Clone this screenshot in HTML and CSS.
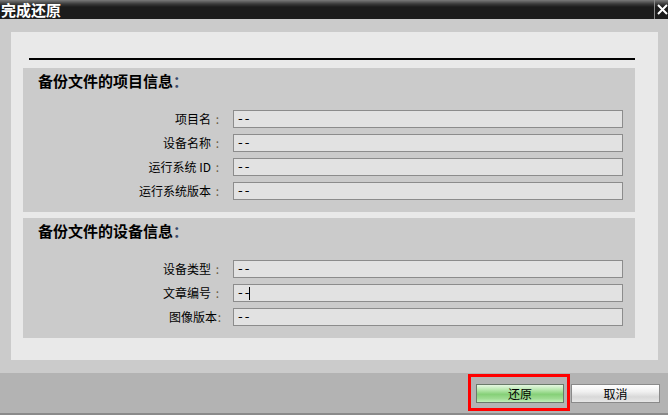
FILE: index.html
```html
<!DOCTYPE html>
<html lang="zh-CN">
    <head>
        <meta charset="UTF-8" />
        <meta name="viewport" content="width=device-width, initial-scale=1.0" />
        <title>完成还原</title>

        <link rel="stylesheet" href="styles.css">
    </head>

    <body>
        <div class="dialog">
            <div class="titlebar">
                <span class="title">完成还原</span>
                <span class="close">
                    <svg width="11" height="11" viewBox="0 0 11 11">
                        <path d="M1 1 L10 10 M10 1 L1 10" stroke="#fff" stroke-width="2" />
                    </svg>
                </span>
            </div>

            <div class="content">
                <div class="panel">
                    <div class="rule"></div>

                    <div class="section">
                        <h3 class="heading">备份文件的项目信息<span class="dots">：</span></h3>
                        <div class="rows">
                            <div class="row">
                                <span class="label">项目名<span class="colon">:</span></span>
                                <div class="field">--</div>
                            </div>
                            <div class="row">
                                <span class="label">设备名称<span class="colon">:</span></span>
                                <div class="field">--</div>
                            </div>
                            <div class="row">
                                <span class="label">运行系统 ID<span class="colon">:</span></span>
                                <div class="field">--</div>
                            </div>
                            <div class="row">
                                <span class="label">运行系统版本<span class="colon">:</span></span>
                                <div class="field">--</div>
                            </div>
                        </div>
                    </div>

                    <div class="section">
                        <h3 class="heading">备份文件的设备信息<span class="dots">：</span></h3>
                        <div class="rows">
                            <div class="row">
                                <span class="label">设备类型<span class="colon">:</span></span>
                                <div class="field">--</div>
                            </div>
                            <div class="row">
                                <span class="label">文章编号<span class="colon">:</span></span>
                                <div class="field">--<span class="caret"></span></div>
                            </div>
                            <div class="row">
                                <span class="label tight">图像版本<span class="colon">:</span></span>
                                <div class="field">--</div>
                            </div>
                        </div>
                    </div>
                </div>
            </div>

            <div class="footer">
                <button class="btn btn-ok">还原<span class="mark"></span></button>
                <button class="btn btn-cancel">取消</button>
            </div>
        </div>
    </body>
</html>
```

FILE: styles.css
```css
body {
    margin: 0;
    font-family: "Noto Sans CJK SC", "DejaVu Sans", sans-serif;
    font-size: 12px;
    color: #000;
    background-color: #cbcbcb;
}

.dialog {
    width: 668px;
    height: 415px;
    display: flex;
    flex-direction: column;
}

/* dark window title */
.titlebar {
    height: 19px;
    display: flex;
    align-items: center;
    justify-content: space-between;
    background: linear-gradient(#7a7a7a 0px, #3a3a3a 4px, #1c1c1c 7px, #1c1c1c 100%);
}
.title {
    color: #fff;
    font-size: 15px;
    font-weight: bold;
    line-height: 19px;
    padding-left: 1px;
}
.close {
    height: 19px;
    width: 13px;
    border-left: 1px solid #8a8a8a;
    display: flex;
    align-items: center;
    justify-content: flex-end;
}

.content {
    flex: 1;
    padding: 13px 10px 13px 11px;
}
.panel {
    height: 100%;
    box-sizing: border-box;
    background-color: #e9e9e9;
    padding: 26px 23px 0 12px;
}
.rule {
    height: 2px;
    background-color: #000;
    margin-left: 6px;
    margin-bottom: 8px;
}

.section {
    background-color: #cbcbcb;
    padding: 3px 0 12px 0;
    margin-bottom: 6px;
}
.heading {
    margin: 0 0 19px 15px;
    font-size: 15px;
    line-height: 20px;
    font-weight: bold;
}
.dots {
    color: #3a4a6a;
}

.rows {
    display: flex;
    flex-direction: column;
    gap: 6px;
}
.row {
    display: flex;
    align-items: center;
}
.label {
    width: 188px;
    text-align: right;
    line-height: 18px;
    padding-right: 11px;
    position: relative;
}
.colon {
    position: absolute;
    right: 3px;
    color: #6a5a40;
}
.label.tight .colon {
    right: 1px;
}
.label.tight {
    padding-right: 5px;
    width: 194px;
}
.field {
    width: 384px;
    height: 16px;
    margin-left: 11px;
    border: 1px solid #8c8c8c;
    background-color: #e2e2e2;
    line-height: 16px;
    padding-left: 4px;
    box-sizing: content-box;
    letter-spacing: 2px;
    font-family: "DejaVu Sans", sans-serif;
    font-size: 13px;
    display: flex;
    align-items: center;
}
.caret {
    display: inline-block;
    width: 1px;
    height: 13px;
    background-color: #000;
    margin-left: -2px;
}

.footer {
    height: 42px;
    background-color: #b3b3b3;
    border-bottom: 2px solid #8a8a8a;
    display: flex;
    justify-content: flex-end;
    align-items: flex-start;
    gap: 7px;
    padding: 11px 8px 0 0;
    box-sizing: border-box;
}
.btn {
    height: 19px;
    width: 88px;
    border: 1px solid #7a7a7a;
    font-family: "Noto Sans CJK SC", sans-serif;
    font-size: 12px;
    line-height: 15px;
    padding: 0;
    color: #000;
    position: relative;
}
.btn-ok {
    background: linear-gradient(#e6f7e2 0%, #b4e6aa 30%, #86d078 55%, #9edc92 80%, #c2eebb 100%);
    border-color: #6a7a6a;
}
.btn-cancel {
    width: 89px;
    background: linear-gradient(#ffffff 0%, #f0f0f0 40%, #d8d8d8 70%, #e6e6e6 100%);
    border-color: #8a8a8a;
}
/* red highlight drawn over the restore button */
.mark {
    position: absolute;
    top: -11px;
    bottom: -9px;
    left: -9px;
    right: -7px;
    border: 3px solid #ff0000;
}
```
